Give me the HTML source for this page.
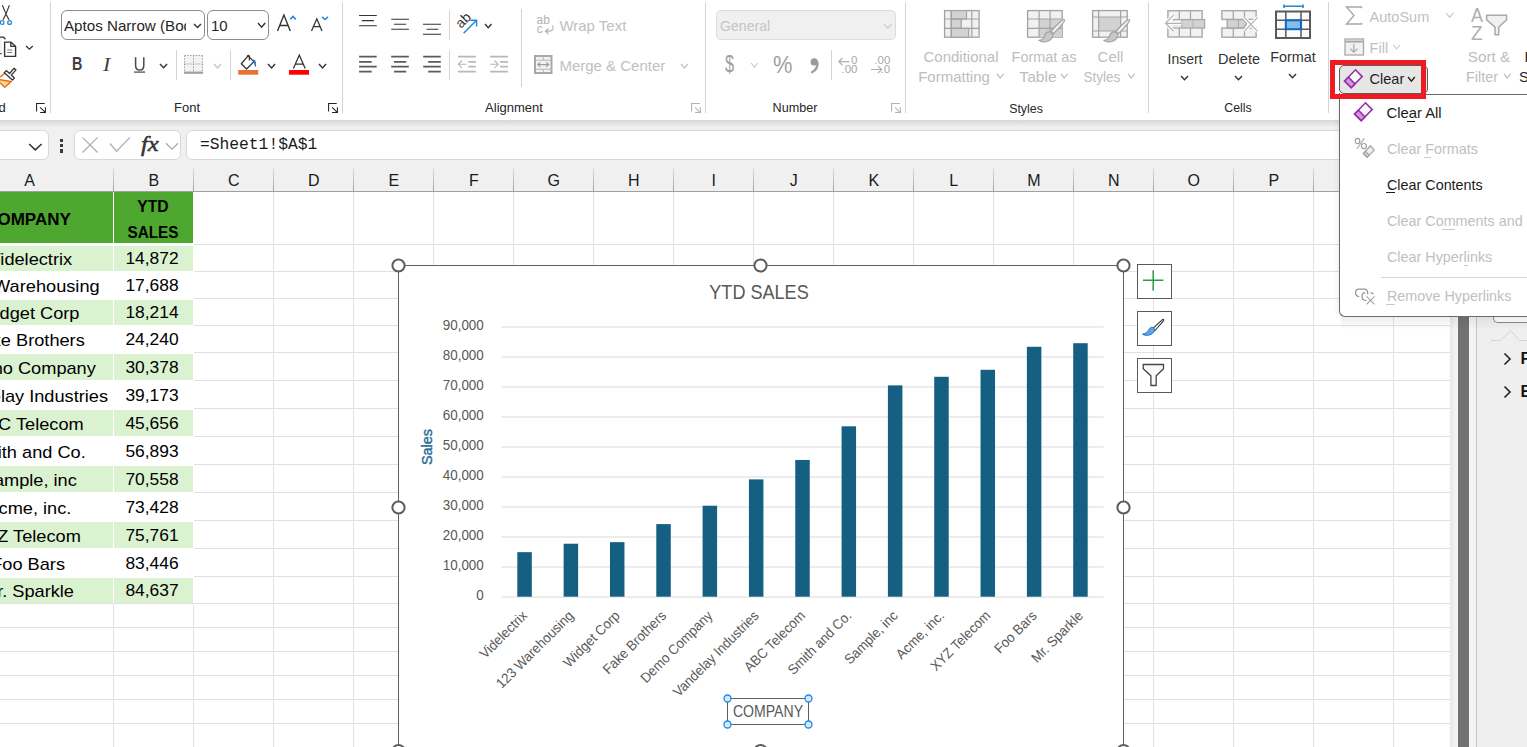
<!DOCTYPE html>
<html><head><meta charset="utf-8"><title>Excel</title>
<style>
*{margin:0;padding:0;box-sizing:border-box}
html,body{width:1527px;height:747px;overflow:hidden;background:#f0f0f0;font-family:"Liberation Sans",sans-serif;position:relative}
svg{overflow:visible}
</style></head><body>
<div style="position:absolute;left:0px;top:0px;width:1527px;height:120px;background:#fff;"></div>
<div style="position:absolute;left:0px;top:120px;width:1527px;height:7px;background:linear-gradient(#d6d6d6,#f0f0f0);"></div>
<div style="position:absolute;left:-10px;top:130px;width:59px;height:30px;background:#fff;border:1px solid #d8d8d8;border-radius:6px;box-sizing:border-box"></div>
<div style="position:absolute;left:74px;top:130px;width:107px;height:30px;background:#fff;border:1px solid #d8d8d8;border-radius:6px;box-sizing:border-box"></div>
<div style="position:absolute;left:186px;top:130px;width:1400px;height:30px;background:#fff;border:1px solid #d8d8d8;border-radius:6px;box-sizing:border-box"></div>
<svg style="position:absolute;left:27px;top:142px;" width="17" height="10" viewBox="0 0 17 10" fill="none"><path d="M2.1 2L8.3 7.9L14.6 2" stroke="#333" stroke-width="1.5"/></svg>
<div style="position:absolute;left:60px;top:139px;width:3.3px;height:3.3px;background:#3a3a3a;"></div>
<div style="position:absolute;left:60px;top:144.2px;width:3.3px;height:3.3px;background:#3a3a3a;"></div>
<div style="position:absolute;left:60px;top:149.4px;width:3.3px;height:3.3px;background:#3a3a3a;"></div>
<svg style="position:absolute;left:80px;top:135px;" width="60" height="20" viewBox="0 0 60 20" fill="none"><path d="M2.5 2.4L17.6 17.5M17.6 2.4L2.5 17.5" stroke="#b0b0b0" stroke-width="1.3"/><path d="M30 8.5L36.5 16.2L50 2.4" stroke="#b0b0b0" stroke-width="1.3"/></svg>
<div style="position:absolute;top:132.88px;font-size:22px;line-height:22px;color:#333;white-space:nowrap;font-family:'Liberation Serif',serif;left:141.00px;transform:scaleX(1.12);transform-origin:0 0;font-style:italic;-webkit-text-stroke:0.5px #333">fx</div>
<svg style="position:absolute;left:164px;top:141px;" width="16" height="10" viewBox="0 0 16 10" fill="none"><path d="M2 2.3L8 8.2L14 2.3" stroke="#a8a8a8" stroke-width="1.2"/></svg>
<div style="position:absolute;top:137.20px;font-size:16.3px;line-height:16.3px;color:#1a1a1a;white-space:nowrap;font-family:'Liberation Mono',monospace;left:200.00px;">=Sheet1!$A$1</div>
<div style="position:absolute;left:0px;top:191px;width:1450px;height:1px;background:#a0a0a0;"></div>
<div style="position:absolute;top:173.46px;font-size:16px;line-height:16px;color:#1a1a1a;white-space:nowrap;font-family:'Liberation Sans',sans-serif;left:-270.50px;width:600px;text-align:center;">A</div>
<div style="position:absolute;left:113px;top:168px;width:1px;height:23px;background:linear-gradient(#e0e0e0,#a0a0a0);"></div>
<div style="position:absolute;top:173.46px;font-size:16px;line-height:16px;color:#1a1a1a;white-space:nowrap;font-family:'Liberation Sans',sans-serif;left:-146.20px;width:600px;text-align:center;">B</div>
<div style="position:absolute;left:193px;top:168px;width:1px;height:23px;background:linear-gradient(#e0e0e0,#a0a0a0);"></div>
<div style="position:absolute;top:173.46px;font-size:16px;line-height:16px;color:#1a1a1a;white-space:nowrap;font-family:'Liberation Sans',sans-serif;left:-66.20px;width:600px;text-align:center;">C</div>
<div style="position:absolute;left:273px;top:168px;width:1px;height:23px;background:linear-gradient(#e0e0e0,#a0a0a0);"></div>
<div style="position:absolute;top:173.46px;font-size:16px;line-height:16px;color:#1a1a1a;white-space:nowrap;font-family:'Liberation Sans',sans-serif;left:13.80px;width:600px;text-align:center;">D</div>
<div style="position:absolute;left:353px;top:168px;width:1px;height:23px;background:linear-gradient(#e0e0e0,#a0a0a0);"></div>
<div style="position:absolute;top:173.46px;font-size:16px;line-height:16px;color:#1a1a1a;white-space:nowrap;font-family:'Liberation Sans',sans-serif;left:93.80px;width:600px;text-align:center;">E</div>
<div style="position:absolute;left:433px;top:168px;width:1px;height:23px;background:linear-gradient(#e0e0e0,#a0a0a0);"></div>
<div style="position:absolute;top:173.46px;font-size:16px;line-height:16px;color:#1a1a1a;white-space:nowrap;font-family:'Liberation Sans',sans-serif;left:173.80px;width:600px;text-align:center;">F</div>
<div style="position:absolute;left:513px;top:168px;width:1px;height:23px;background:linear-gradient(#e0e0e0,#a0a0a0);"></div>
<div style="position:absolute;top:173.46px;font-size:16px;line-height:16px;color:#1a1a1a;white-space:nowrap;font-family:'Liberation Sans',sans-serif;left:253.80px;width:600px;text-align:center;">G</div>
<div style="position:absolute;left:593px;top:168px;width:1px;height:23px;background:linear-gradient(#e0e0e0,#a0a0a0);"></div>
<div style="position:absolute;top:173.46px;font-size:16px;line-height:16px;color:#1a1a1a;white-space:nowrap;font-family:'Liberation Sans',sans-serif;left:333.80px;width:600px;text-align:center;">H</div>
<div style="position:absolute;left:673px;top:168px;width:1px;height:23px;background:linear-gradient(#e0e0e0,#a0a0a0);"></div>
<div style="position:absolute;top:173.46px;font-size:16px;line-height:16px;color:#1a1a1a;white-space:nowrap;font-family:'Liberation Sans',sans-serif;left:413.80px;width:600px;text-align:center;">I</div>
<div style="position:absolute;left:753px;top:168px;width:1px;height:23px;background:linear-gradient(#e0e0e0,#a0a0a0);"></div>
<div style="position:absolute;top:173.46px;font-size:16px;line-height:16px;color:#1a1a1a;white-space:nowrap;font-family:'Liberation Sans',sans-serif;left:493.80px;width:600px;text-align:center;">J</div>
<div style="position:absolute;left:833px;top:168px;width:1px;height:23px;background:linear-gradient(#e0e0e0,#a0a0a0);"></div>
<div style="position:absolute;top:173.46px;font-size:16px;line-height:16px;color:#1a1a1a;white-space:nowrap;font-family:'Liberation Sans',sans-serif;left:573.80px;width:600px;text-align:center;">K</div>
<div style="position:absolute;left:913px;top:168px;width:1px;height:23px;background:linear-gradient(#e0e0e0,#a0a0a0);"></div>
<div style="position:absolute;top:173.46px;font-size:16px;line-height:16px;color:#1a1a1a;white-space:nowrap;font-family:'Liberation Sans',sans-serif;left:653.80px;width:600px;text-align:center;">L</div>
<div style="position:absolute;left:993px;top:168px;width:1px;height:23px;background:linear-gradient(#e0e0e0,#a0a0a0);"></div>
<div style="position:absolute;top:173.46px;font-size:16px;line-height:16px;color:#1a1a1a;white-space:nowrap;font-family:'Liberation Sans',sans-serif;left:733.80px;width:600px;text-align:center;">M</div>
<div style="position:absolute;left:1073px;top:168px;width:1px;height:23px;background:linear-gradient(#e0e0e0,#a0a0a0);"></div>
<div style="position:absolute;top:173.46px;font-size:16px;line-height:16px;color:#1a1a1a;white-space:nowrap;font-family:'Liberation Sans',sans-serif;left:813.80px;width:600px;text-align:center;">N</div>
<div style="position:absolute;left:1153px;top:168px;width:1px;height:23px;background:linear-gradient(#e0e0e0,#a0a0a0);"></div>
<div style="position:absolute;top:173.46px;font-size:16px;line-height:16px;color:#1a1a1a;white-space:nowrap;font-family:'Liberation Sans',sans-serif;left:893.80px;width:600px;text-align:center;">O</div>
<div style="position:absolute;left:1233px;top:168px;width:1px;height:23px;background:linear-gradient(#e0e0e0,#a0a0a0);"></div>
<div style="position:absolute;top:173.46px;font-size:16px;line-height:16px;color:#1a1a1a;white-space:nowrap;font-family:'Liberation Sans',sans-serif;left:973.80px;width:600px;text-align:center;">P</div>
<div style="position:absolute;left:1313px;top:168px;width:1px;height:23px;background:linear-gradient(#e0e0e0,#a0a0a0);"></div>
<div style="position:absolute;top:173.46px;font-size:16px;line-height:16px;color:#1a1a1a;white-space:nowrap;font-family:'Liberation Sans',sans-serif;left:1053.80px;width:600px;text-align:center;">Q</div>
<div style="position:absolute;left:0px;top:192px;width:1450px;height:555px;background:#fff;"></div>
<div style="position:absolute;left:0px;top:244px;width:1450px;height:1px;background:#e1e1e1;"></div>
<div style="position:absolute;left:0px;top:271px;width:1450px;height:1px;background:#e1e1e1;"></div>
<div style="position:absolute;left:0px;top:298px;width:1450px;height:1px;background:#e1e1e1;"></div>
<div style="position:absolute;left:0px;top:325px;width:1450px;height:1px;background:#e1e1e1;"></div>
<div style="position:absolute;left:0px;top:352px;width:1450px;height:1px;background:#e1e1e1;"></div>
<div style="position:absolute;left:0px;top:380px;width:1450px;height:1px;background:#e1e1e1;"></div>
<div style="position:absolute;left:0px;top:408px;width:1450px;height:1px;background:#e1e1e1;"></div>
<div style="position:absolute;left:0px;top:436px;width:1450px;height:1px;background:#e1e1e1;"></div>
<div style="position:absolute;left:0px;top:464px;width:1450px;height:1px;background:#e1e1e1;"></div>
<div style="position:absolute;left:0px;top:492px;width:1450px;height:1px;background:#e1e1e1;"></div>
<div style="position:absolute;left:0px;top:520px;width:1450px;height:1px;background:#e1e1e1;"></div>
<div style="position:absolute;left:0px;top:548px;width:1450px;height:1px;background:#e1e1e1;"></div>
<div style="position:absolute;left:0px;top:576px;width:1450px;height:1px;background:#e1e1e1;"></div>
<div style="position:absolute;left:0px;top:603px;width:1450px;height:1px;background:#e1e1e1;"></div>
<div style="position:absolute;left:0px;top:627px;width:1450px;height:1px;background:#e1e1e1;"></div>
<div style="position:absolute;left:0px;top:651px;width:1450px;height:1px;background:#e1e1e1;"></div>
<div style="position:absolute;left:0px;top:675px;width:1450px;height:1px;background:#e1e1e1;"></div>
<div style="position:absolute;left:0px;top:699px;width:1450px;height:1px;background:#e1e1e1;"></div>
<div style="position:absolute;left:0px;top:723px;width:1450px;height:1px;background:#e1e1e1;"></div>
<div style="position:absolute;left:113px;top:192px;width:1px;height:555px;background:#e1e1e1;"></div>
<div style="position:absolute;left:193px;top:192px;width:1px;height:555px;background:#e1e1e1;"></div>
<div style="position:absolute;left:273px;top:192px;width:1px;height:555px;background:#e1e1e1;"></div>
<div style="position:absolute;left:353px;top:192px;width:1px;height:555px;background:#e1e1e1;"></div>
<div style="position:absolute;left:433px;top:192px;width:1px;height:555px;background:#e1e1e1;"></div>
<div style="position:absolute;left:513px;top:192px;width:1px;height:555px;background:#e1e1e1;"></div>
<div style="position:absolute;left:593px;top:192px;width:1px;height:555px;background:#e1e1e1;"></div>
<div style="position:absolute;left:673px;top:192px;width:1px;height:555px;background:#e1e1e1;"></div>
<div style="position:absolute;left:753px;top:192px;width:1px;height:555px;background:#e1e1e1;"></div>
<div style="position:absolute;left:833px;top:192px;width:1px;height:555px;background:#e1e1e1;"></div>
<div style="position:absolute;left:913px;top:192px;width:1px;height:555px;background:#e1e1e1;"></div>
<div style="position:absolute;left:993px;top:192px;width:1px;height:555px;background:#e1e1e1;"></div>
<div style="position:absolute;left:1073px;top:192px;width:1px;height:555px;background:#e1e1e1;"></div>
<div style="position:absolute;left:1153px;top:192px;width:1px;height:555px;background:#e1e1e1;"></div>
<div style="position:absolute;left:1233px;top:192px;width:1px;height:555px;background:#e1e1e1;"></div>
<div style="position:absolute;left:1313px;top:192px;width:1px;height:555px;background:#e1e1e1;"></div>
<div style="position:absolute;left:1393px;top:192px;width:1px;height:555px;background:#e1e1e1;"></div>
<div style="position:absolute;left:0px;top:192px;width:113px;height:51px;background:#4ea72e;"></div>
<div style="position:absolute;left:114px;top:192px;width:79px;height:51px;background:#4ea72e;"></div>
<div style="position:absolute;left:113px;top:192px;width:1px;height:412px;background:#fff;"></div>
<div style="position:absolute;left:193px;top:192px;width:1px;height:412px;background:#fff;"></div>
<div style="position:absolute;left:0px;top:243px;width:194px;height:3px;background:#fff;"></div>
<div style="position:absolute;left:0px;top:244px;width:194px;height:1px;background:#fff;"></div>
<div style="position:absolute;left:0px;top:246px;width:113px;height:25px;background:#daf2d0;"></div>
<div style="position:absolute;left:114px;top:246px;width:79px;height:25px;background:#daf2d0;"></div>
<div style="position:absolute;left:0px;top:271px;width:194px;height:1px;background:#fff;"></div>
<div style="position:absolute;left:0px;top:298px;width:194px;height:1px;background:#fff;"></div>
<div style="position:absolute;left:0px;top:300px;width:113px;height:25px;background:#daf2d0;"></div>
<div style="position:absolute;left:114px;top:300px;width:79px;height:25px;background:#daf2d0;"></div>
<div style="position:absolute;left:0px;top:325px;width:194px;height:1px;background:#fff;"></div>
<div style="position:absolute;left:0px;top:352px;width:194px;height:1px;background:#fff;"></div>
<div style="position:absolute;left:0px;top:354px;width:113px;height:26px;background:#daf2d0;"></div>
<div style="position:absolute;left:114px;top:354px;width:79px;height:26px;background:#daf2d0;"></div>
<div style="position:absolute;left:0px;top:380px;width:194px;height:1px;background:#fff;"></div>
<div style="position:absolute;left:0px;top:408px;width:194px;height:1px;background:#fff;"></div>
<div style="position:absolute;left:0px;top:410px;width:113px;height:26px;background:#daf2d0;"></div>
<div style="position:absolute;left:114px;top:410px;width:79px;height:26px;background:#daf2d0;"></div>
<div style="position:absolute;left:0px;top:436px;width:194px;height:1px;background:#fff;"></div>
<div style="position:absolute;left:0px;top:464px;width:194px;height:1px;background:#fff;"></div>
<div style="position:absolute;left:0px;top:466px;width:113px;height:26px;background:#daf2d0;"></div>
<div style="position:absolute;left:114px;top:466px;width:79px;height:26px;background:#daf2d0;"></div>
<div style="position:absolute;left:0px;top:492px;width:194px;height:1px;background:#fff;"></div>
<div style="position:absolute;left:0px;top:520px;width:194px;height:1px;background:#fff;"></div>
<div style="position:absolute;left:0px;top:522px;width:113px;height:26px;background:#daf2d0;"></div>
<div style="position:absolute;left:114px;top:522px;width:79px;height:26px;background:#daf2d0;"></div>
<div style="position:absolute;left:0px;top:548px;width:194px;height:1px;background:#fff;"></div>
<div style="position:absolute;left:0px;top:576px;width:194px;height:1px;background:#fff;"></div>
<div style="position:absolute;left:0px;top:578px;width:113px;height:25px;background:#daf2d0;"></div>
<div style="position:absolute;left:114px;top:578px;width:79px;height:25px;background:#daf2d0;"></div>
<div style="position:absolute;left:0px;top:603px;width:194px;height:1px;background:#e1e1e1;"></div>
<div style="position:absolute;top:210.61px;font-size:17px;line-height:17px;color:#000;white-space:nowrap;font-family:'Liberation Sans',sans-serif;font-weight:bold;left:-272.00px;width:600px;text-align:center;transform:scaleX(1.0);transform-origin:50% 0;">COMPANY</div>
<div style="position:absolute;top:197.61px;font-size:17px;line-height:17px;color:#000;white-space:nowrap;font-family:'Liberation Sans',sans-serif;font-weight:bold;left:-147.00px;width:600px;text-align:center;transform:scaleX(0.92);transform-origin:50% 0;">YTD</div>
<div style="position:absolute;top:223.61px;font-size:17px;line-height:17px;color:#000;white-space:nowrap;font-family:'Liberation Sans',sans-serif;font-weight:bold;left:-147.00px;width:600px;text-align:center;transform:scaleX(0.9);transform-origin:50% 0;">SALES</div>
<div style="position:absolute;top:250.61px;font-size:17px;line-height:17px;color:#000;white-space:nowrap;font-family:'Liberation Sans',sans-serif;right:1454.60px;text-align:right;transform:scaleX(1.07);transform-origin:100% 0;">Videlectrix</div>
<div style="position:absolute;top:250.27px;font-size:17.4px;line-height:17.4px;color:#000;white-space:nowrap;font-family:'Liberation Sans',sans-serif;left:-148.00px;width:600px;text-align:center;">14,872</div>
<div style="position:absolute;top:277.61px;font-size:17px;line-height:17px;color:#000;white-space:nowrap;font-family:'Liberation Sans',sans-serif;right:1427.20px;text-align:right;transform:scaleX(1.07);transform-origin:100% 0;">123 Warehousing</div>
<div style="position:absolute;top:277.27px;font-size:17.4px;line-height:17.4px;color:#000;white-space:nowrap;font-family:'Liberation Sans',sans-serif;left:-148.00px;width:600px;text-align:center;">17,688</div>
<div style="position:absolute;top:304.61px;font-size:17px;line-height:17px;color:#000;white-space:nowrap;font-family:'Liberation Sans',sans-serif;right:1447.50px;text-align:right;transform:scaleX(1.07);transform-origin:100% 0;">Widget Corp</div>
<div style="position:absolute;top:304.27px;font-size:17.4px;line-height:17.4px;color:#000;white-space:nowrap;font-family:'Liberation Sans',sans-serif;left:-148.00px;width:600px;text-align:center;">18,214</div>
<div style="position:absolute;top:331.61px;font-size:17px;line-height:17px;color:#000;white-space:nowrap;font-family:'Liberation Sans',sans-serif;right:1442.20px;text-align:right;transform:scaleX(1.07);transform-origin:100% 0;">Fake Brothers</div>
<div style="position:absolute;top:331.27px;font-size:17.4px;line-height:17.4px;color:#000;white-space:nowrap;font-family:'Liberation Sans',sans-serif;left:-148.00px;width:600px;text-align:center;">24,240</div>
<div style="position:absolute;top:359.61px;font-size:17px;line-height:17px;color:#000;white-space:nowrap;font-family:'Liberation Sans',sans-serif;right:1431.40px;text-align:right;transform:scaleX(1.07);transform-origin:100% 0;">Demo Company</div>
<div style="position:absolute;top:359.27px;font-size:17.4px;line-height:17.4px;color:#000;white-space:nowrap;font-family:'Liberation Sans',sans-serif;left:-148.00px;width:600px;text-align:center;">30,378</div>
<div style="position:absolute;top:387.61px;font-size:17px;line-height:17px;color:#000;white-space:nowrap;font-family:'Liberation Sans',sans-serif;right:1419.00px;text-align:right;transform:scaleX(1.07);transform-origin:100% 0;">Vandelay Industries</div>
<div style="position:absolute;top:387.27px;font-size:17.4px;line-height:17.4px;color:#000;white-space:nowrap;font-family:'Liberation Sans',sans-serif;left:-148.00px;width:600px;text-align:center;">39,173</div>
<div style="position:absolute;top:415.61px;font-size:17px;line-height:17px;color:#000;white-space:nowrap;font-family:'Liberation Sans',sans-serif;right:1443.10px;text-align:right;transform:scaleX(1.07);transform-origin:100% 0;">ABC Telecom</div>
<div style="position:absolute;top:415.27px;font-size:17.4px;line-height:17.4px;color:#000;white-space:nowrap;font-family:'Liberation Sans',sans-serif;left:-148.00px;width:600px;text-align:center;">45,656</div>
<div style="position:absolute;top:443.61px;font-size:17px;line-height:17px;color:#000;white-space:nowrap;font-family:'Liberation Sans',sans-serif;right:1441.40px;text-align:right;transform:scaleX(1.07);transform-origin:100% 0;">Smith and Co.</div>
<div style="position:absolute;top:443.27px;font-size:17.4px;line-height:17.4px;color:#000;white-space:nowrap;font-family:'Liberation Sans',sans-serif;left:-148.00px;width:600px;text-align:center;">56,893</div>
<div style="position:absolute;top:471.61px;font-size:17px;line-height:17px;color:#000;white-space:nowrap;font-family:'Liberation Sans',sans-serif;right:1450.40px;text-align:right;transform:scaleX(1.07);transform-origin:100% 0;">Sample, inc</div>
<div style="position:absolute;top:471.27px;font-size:17.4px;line-height:17.4px;color:#000;white-space:nowrap;font-family:'Liberation Sans',sans-serif;left:-148.00px;width:600px;text-align:center;">70,558</div>
<div style="position:absolute;top:499.61px;font-size:17px;line-height:17px;color:#000;white-space:nowrap;font-family:'Liberation Sans',sans-serif;right:1455.20px;text-align:right;transform:scaleX(1.07);transform-origin:100% 0;">Acme, inc.</div>
<div style="position:absolute;top:499.27px;font-size:17.4px;line-height:17.4px;color:#000;white-space:nowrap;font-family:'Liberation Sans',sans-serif;left:-148.00px;width:600px;text-align:center;">73,428</div>
<div style="position:absolute;top:527.61px;font-size:17px;line-height:17px;color:#000;white-space:nowrap;font-family:'Liberation Sans',sans-serif;right:1446.10px;text-align:right;transform:scaleX(1.07);transform-origin:100% 0;">XYZ Telecom</div>
<div style="position:absolute;top:527.27px;font-size:17.4px;line-height:17.4px;color:#000;white-space:nowrap;font-family:'Liberation Sans',sans-serif;left:-148.00px;width:600px;text-align:center;">75,761</div>
<div style="position:absolute;top:555.61px;font-size:17px;line-height:17px;color:#000;white-space:nowrap;font-family:'Liberation Sans',sans-serif;right:1462.30px;text-align:right;transform:scaleX(1.07);transform-origin:100% 0;">Foo Bars</div>
<div style="position:absolute;top:555.27px;font-size:17.4px;line-height:17.4px;color:#000;white-space:nowrap;font-family:'Liberation Sans',sans-serif;left:-148.00px;width:600px;text-align:center;">83,446</div>
<div style="position:absolute;top:582.61px;font-size:17px;line-height:17px;color:#000;white-space:nowrap;font-family:'Liberation Sans',sans-serif;right:1453.30px;text-align:right;transform:scaleX(1.07);transform-origin:100% 0;">Mr. Sparkle</div>
<div style="position:absolute;top:582.27px;font-size:17.4px;line-height:17.4px;color:#000;white-space:nowrap;font-family:'Liberation Sans',sans-serif;left:-148.00px;width:600px;text-align:center;">84,637</div>
<div style="position:absolute;left:398px;top:265px;width:726px;height:486px;background:#fff;border:1px solid #606060;box-sizing:border-box"></div>
<svg style="position:absolute;left:0px;top:0px;pointer-events:none" width="1527" height="747" viewBox="0 0 1527 747" fill="none"><rect x="501.4" y="596.5" width="602.1999999999999" height="1" fill="#d9d9d9"/><rect x="501.4" y="566.5" width="602.1999999999999" height="1" fill="#d9d9d9"/><rect x="501.4" y="536.5" width="602.1999999999999" height="1" fill="#d9d9d9"/><rect x="501.4" y="506.5" width="602.1999999999999" height="1" fill="#d9d9d9"/><rect x="501.4" y="476.5" width="602.1999999999999" height="1" fill="#d9d9d9"/><rect x="501.4" y="446.5" width="602.1999999999999" height="1" fill="#d9d9d9"/><rect x="501.4" y="416.5" width="602.1999999999999" height="1" fill="#d9d9d9"/><rect x="501.4" y="386.5" width="602.1999999999999" height="1" fill="#d9d9d9"/><rect x="501.4" y="356.5" width="602.1999999999999" height="1" fill="#d9d9d9"/><rect x="501.4" y="326.5" width="602.1999999999999" height="1" fill="#d9d9d9"/><rect x="517.31" y="552.16" width="14.5" height="44.54" fill="#156082"/><rect x="563.63" y="543.72" width="14.5" height="52.98" fill="#156082"/><rect x="609.96" y="542.15" width="14.5" height="54.55" fill="#156082"/><rect x="656.28" y="524.10" width="14.5" height="72.60" fill="#156082"/><rect x="702.60" y="505.72" width="14.5" height="90.98" fill="#156082"/><rect x="748.93" y="479.38" width="14.5" height="117.32" fill="#156082"/><rect x="795.25" y="459.96" width="14.5" height="136.74" fill="#156082"/><rect x="841.57" y="426.31" width="14.5" height="170.39" fill="#156082"/><rect x="887.90" y="385.38" width="14.5" height="211.32" fill="#156082"/><rect x="934.22" y="376.78" width="14.5" height="219.92" fill="#156082"/><rect x="980.54" y="369.80" width="14.5" height="226.90" fill="#156082"/><rect x="1026.87" y="346.78" width="14.5" height="249.92" fill="#156082"/><rect x="1073.19" y="343.21" width="14.5" height="253.49" fill="#156082"/></svg>
<div style="position:absolute;top:587.65px;font-size:14px;line-height:14px;color:#595959;white-space:nowrap;font-family:'Liberation Sans',sans-serif;right:1043.30px;text-align:right;transform:scaleX(0.96);transform-origin:100% 0;">0</div>
<div style="position:absolute;top:557.70px;font-size:14px;line-height:14px;color:#595959;white-space:nowrap;font-family:'Liberation Sans',sans-serif;right:1043.30px;text-align:right;transform:scaleX(0.96);transform-origin:100% 0;">10,000</div>
<div style="position:absolute;top:527.75px;font-size:14px;line-height:14px;color:#595959;white-space:nowrap;font-family:'Liberation Sans',sans-serif;right:1043.30px;text-align:right;transform:scaleX(0.96);transform-origin:100% 0;">20,000</div>
<div style="position:absolute;top:497.80px;font-size:14px;line-height:14px;color:#595959;white-space:nowrap;font-family:'Liberation Sans',sans-serif;right:1043.30px;text-align:right;transform:scaleX(0.96);transform-origin:100% 0;">30,000</div>
<div style="position:absolute;top:467.85px;font-size:14px;line-height:14px;color:#595959;white-space:nowrap;font-family:'Liberation Sans',sans-serif;right:1043.30px;text-align:right;transform:scaleX(0.96);transform-origin:100% 0;">40,000</div>
<div style="position:absolute;top:437.90px;font-size:14px;line-height:14px;color:#595959;white-space:nowrap;font-family:'Liberation Sans',sans-serif;right:1043.30px;text-align:right;transform:scaleX(0.96);transform-origin:100% 0;">50,000</div>
<div style="position:absolute;top:407.95px;font-size:14px;line-height:14px;color:#595959;white-space:nowrap;font-family:'Liberation Sans',sans-serif;right:1043.30px;text-align:right;transform:scaleX(0.96);transform-origin:100% 0;">60,000</div>
<div style="position:absolute;top:378.00px;font-size:14px;line-height:14px;color:#595959;white-space:nowrap;font-family:'Liberation Sans',sans-serif;right:1043.30px;text-align:right;transform:scaleX(0.96);transform-origin:100% 0;">70,000</div>
<div style="position:absolute;top:348.05px;font-size:14px;line-height:14px;color:#595959;white-space:nowrap;font-family:'Liberation Sans',sans-serif;right:1043.30px;text-align:right;transform:scaleX(0.96);transform-origin:100% 0;">80,000</div>
<div style="position:absolute;top:318.10px;font-size:14px;line-height:14px;color:#595959;white-space:nowrap;font-family:'Liberation Sans',sans-serif;right:1043.30px;text-align:right;transform:scaleX(0.96);transform-origin:100% 0;">90,000</div>
<div style="position:absolute;top:280.92px;font-size:21px;line-height:21px;color:#595959;white-space:nowrap;font-family:'Liberation Sans',sans-serif;left:459.00px;width:600px;text-align:center;transform:scaleX(0.86);transform-origin:50% 0;">YTD SALES</div>
<div style="position:absolute;left:327px;top:437px;width:200px;height:20px;text-align:center;font-size:15px;line-height:20px;color:#1f6b94;-webkit-text-stroke:0.4px #1f6b94;transform:rotate(-90deg) scaleX(0.96);transform-origin:100px 10px;font-family:'Liberation Sans',sans-serif">Sales</div>
<svg style="position:absolute;left:0px;top:0px;" width="1527" height="747" viewBox="0 0 1527 747" fill="none"><g font-family="Liberation Sans" font-size="14" fill="#595959" textLength=""><text x="0" y="0" text-anchor="end" transform="translate(528.06 616.50) rotate(-45) scale(0.94 1)">Videlectrix</text><text x="0" y="0" text-anchor="end" transform="translate(574.38 616.50) rotate(-45) scale(0.94 1)">123 Warehousing</text><text x="0" y="0" text-anchor="end" transform="translate(620.71 616.50) rotate(-45) scale(0.94 1)">Widget Corp</text><text x="0" y="0" text-anchor="end" transform="translate(667.03 616.50) rotate(-45) scale(0.94 1)">Fake Brothers</text><text x="0" y="0" text-anchor="end" transform="translate(713.35 616.50) rotate(-45) scale(0.94 1)">Demo Company</text><text x="0" y="0" text-anchor="end" transform="translate(759.68 616.50) rotate(-45) scale(0.94 1)">Vandelay Industries</text><text x="0" y="0" text-anchor="end" transform="translate(806.00 616.50) rotate(-45) scale(0.94 1)">ABC Telecom</text><text x="0" y="0" text-anchor="end" transform="translate(852.32 616.50) rotate(-45) scale(0.94 1)">Smith and Co.</text><text x="0" y="0" text-anchor="end" transform="translate(898.65 616.50) rotate(-45) scale(0.94 1)">Sample, inc</text><text x="0" y="0" text-anchor="end" transform="translate(944.97 616.50) rotate(-45) scale(0.94 1)">Acme, inc.</text><text x="0" y="0" text-anchor="end" transform="translate(991.29 616.50) rotate(-45) scale(0.94 1)">XYZ Telecom</text><text x="0" y="0" text-anchor="end" transform="translate(1037.62 616.50) rotate(-45) scale(0.94 1)">Foo Bars</text><text x="0" y="0" text-anchor="end" transform="translate(1083.94 616.50) rotate(-45) scale(0.94 1)">Mr. Sparkle</text></g></svg>
<div style="position:absolute;left:727px;top:698px;width:82px;height:27px;background:#fff;border:1px solid #5f5f5f;box-sizing:border-box"></div>
<div style="position:absolute;top:703.66px;font-size:16px;line-height:16px;color:#595959;white-space:nowrap;font-family:'Liberation Sans',sans-serif;left:468.00px;width:600px;text-align:center;transform:scaleX(0.88);transform-origin:50% 0;">COMPANY</div>
<svg style="position:absolute;left:0px;top:0px;" width="1527" height="747" viewBox="0 0 1527 747" fill="none"><circle cx="727.5" cy="698.5" r="3.5" fill="#d6e8f7" stroke="#1e88e5" stroke-width="1.3"/><circle cx="808.5" cy="698.5" r="3.5" fill="#d6e8f7" stroke="#1e88e5" stroke-width="1.3"/><circle cx="727.5" cy="724.5" r="3.5" fill="#d6e8f7" stroke="#1e88e5" stroke-width="1.3"/><circle cx="808.5" cy="724.5" r="3.5" fill="#d6e8f7" stroke="#1e88e5" stroke-width="1.3"/><circle cx="398.5" cy="265.5" r="6.1" fill="#fff" stroke="#5c5c5c" stroke-width="2"/><circle cx="760.5" cy="265.5" r="6.1" fill="#fff" stroke="#5c5c5c" stroke-width="2"/><circle cx="1123.5" cy="265.5" r="6.1" fill="#fff" stroke="#5c5c5c" stroke-width="2"/><circle cx="398.5" cy="507.5" r="6.1" fill="#fff" stroke="#5c5c5c" stroke-width="2"/><circle cx="1123.5" cy="507.5" r="6.1" fill="#fff" stroke="#5c5c5c" stroke-width="2"/><circle cx="398.5" cy="751" r="6.1" fill="#fff" stroke="#5c5c5c" stroke-width="2"/><circle cx="760.5" cy="751" r="6.1" fill="#fff" stroke="#5c5c5c" stroke-width="2"/><circle cx="1123.5" cy="751" r="6.1" fill="#fff" stroke="#5c5c5c" stroke-width="2"/></svg>
<div style="position:absolute;left:1137px;top:264px;width:35px;height:35px;background:#fff;border:1px solid #5a5a5a;box-sizing:border-box"></div>
<div style="position:absolute;left:1137px;top:311px;width:35px;height:35px;background:#fff;border:1px solid #5a5a5a;box-sizing:border-box"></div>
<div style="position:absolute;left:1137px;top:358px;width:35px;height:35px;background:#fff;border:1px solid #5a5a5a;box-sizing:border-box"></div>
<svg style="position:absolute;left:1137px;top:264px;" width="35" height="35" viewBox="0 0 35 35" fill="none"><path d="M16.2 6.3V26.7M6 16.3H26.4" stroke="#2a9d48" stroke-width="1.5"/></svg>
<svg style="position:absolute;left:1137px;top:311px;" width="35" height="35" viewBox="0 0 35 35" fill="none"><path d="M15.8 17.4L25.2 8.8C26.3 7.8 27.3 8.8 26.5 9.9L18 19.5Z" stroke="#333" stroke-width="1.1" fill="#fff" stroke-linejoin="round"/><path d="M17.8 19.2C17.6 16.5 14.6 15.5 12.8 17.3C11 19.1 11.3 21.8 5.6 23.2C8.5 25.3 15.8 24.6 17.8 19.2Z" fill="#5ea6e6" stroke="#1f6fc0" stroke-width="1"/></svg>
<svg style="position:absolute;left:1137px;top:358px;" width="35" height="35" viewBox="0 0 35 35" fill="none"><path d="M6.2 6.5H26.5V10.7L19.2 17.7V27.5H13.9V17.7L6.2 10.7Z" stroke="#444" stroke-width="1.3" stroke-linejoin="round" fill="#f8f8f8"/></svg>
<svg style="position:absolute;left:0px;top:0px;" width="20" height="30" viewBox="0 0 20 30" fill="none"><path d="M2.4 5.3L6 13.9L3 19.8M9.4 5.3L6 13.9L9 19.8" stroke="#333" stroke-width="1.1" stroke-linejoin="round"/><circle cx="2.1" cy="22.5" r="1.9" stroke="#2b88d8" stroke-width="1.3"/><circle cx="9.6" cy="22.5" r="1.9" stroke="#2b88d8" stroke-width="1.3"/></svg>
<svg style="position:absolute;left:0px;top:32px;" width="20" height="28" viewBox="0 0 20 28" fill="none"><path d="M0 5.2H3.6L5.4 7.2" stroke="#333" stroke-width="1.3"/><rect x="0" y="6" width="2" height="15.5" fill="#f3f3f3"/><path d="M0 21.7H1.8" stroke="#555" stroke-width="1.2"/><path d="M4.6 10.1H10.8L15.6 14.6V24.4H4.6Z" stroke="#333" stroke-width="1.4" stroke-linejoin="round" fill="#fff"/><path d="M10.8 9.9V14.4H15.6" stroke="#333" stroke-width="1.3"/><path d="M7.3 18H12.2M7.3 20.5H12.2" stroke="#777" stroke-width="1.1"/></svg>
<svg style="position:absolute;left:24px;top:43.7px;" width="10.799999999999997" height="7.199999999999996" viewBox="0 0 10.799999999999997 7.199999999999996" fill="none"><path d="M2 2L5.40 5.20L8.80 2" stroke="#333" stroke-width="1.3"/></svg>
<svg style="position:absolute;left:0px;top:64px;" width="20" height="28" viewBox="0 0 20 28" fill="none"><path d="M0 15.8L11.2 17.4L4.8 23.2L0 18.8Z" fill="#fbd98c"/><path d="M0 12.5L4.3 8.8L12.4 16.1L11.2 17.4L0 15.8Z" fill="#fff"/><path d="M0 12.8C1.5 12 3 11 4.3 9.6M0 15.8L11.2 17.4L4.8 23.2L0 18.8" stroke="#e3711c" stroke-width="1.5" fill="none" stroke-linejoin="round"/><path d="M4.3 8.8L6.3 6.6L9.6 9.5L14.1 4.2L16 5.9L11.3 11.1L14.4 13.9L12.4 16.1Z" stroke="#333" stroke-width="1.3" fill="#fff" stroke-linejoin="round"/></svg>
<div style="position:absolute;top:100.80px;font-size:13px;line-height:13px;color:#262626;white-space:nowrap;font-family:'Liberation Sans',sans-serif;left:-1.50px;">d</div>
<svg style="position:absolute;left:36px;top:103px;" width="11" height="11" viewBox="0 0 11 11" fill="none"><path d="M.6 8.5V.5H8.7M4.1 4.3L9.3 9.3M9.4 4.2V9.4H4.1" stroke="#222" stroke-width="1.05"/></svg>
<div style="position:absolute;left:50px;top:2px;width:1px;height:111px;background:#d4d4d4;"></div>
<div style="position:absolute;left:61px;top:10px;width:144px;height:30px;background:#fff;border:1px solid #8c8c8c;border-radius:6px;box-sizing:border-box"></div>
<div style="position:absolute;left:62px;top:11px;width:124px;height:28px;overflow:hidden"><div style="position:absolute;top:7.00px;font-size:15px;line-height:15px;color:#262626;white-space:nowrap;font-family:'Liberation Sans',sans-serif;left:2.40px;transform:scaleX(1.01);transform-origin:0 0;">Aptos Narrow (Body)</div>
</div>
<svg style="position:absolute;left:191.9px;top:21.9px;" width="11.0" height="7.600000000000001" viewBox="0 0 11.0 7.600000000000001" fill="none"><path d="M2 2L5.50 5.60L9.00 2" stroke="#333" stroke-width="1.4"/></svg>
<div style="position:absolute;left:207px;top:10px;width:62px;height:30px;background:#fff;border:1px solid #8c8c8c;border-radius:6px;box-sizing:border-box"></div>
<div style="position:absolute;top:18.40px;font-size:15px;line-height:15px;color:#262626;white-space:nowrap;font-family:'Liberation Sans',sans-serif;left:211.00px;">10</div>
<svg style="position:absolute;left:255.8px;top:21.3px;" width="11.199999999999989" height="8.2" viewBox="0 0 11.199999999999989 8.2" fill="none"><path d="M2 2L5.60 6.20L9.20 2" stroke="#333" stroke-width="1.4"/></svg>
<svg style="position:absolute;left:276px;top:14px;" width="22" height="19" viewBox="0 0 22 19" fill="none"><path d="M1.5 17.1L7.9 1.1L14.3 17.1M4.2 11.5H11.6" stroke="#333" stroke-width="1.4"/><path d="M14.2 5.4L17 2.4L19.8 5.4" stroke="#2f86de" stroke-width="1.6"/></svg>
<svg style="position:absolute;left:310px;top:15px;" width="20" height="18" viewBox="0 0 20 18" fill="none"><path d="M1.5 16.1L6.8 3.8L12 16.1M3.8 11.6H9.8" stroke="#333" stroke-width="1.3"/><path d="M12 1.8L15 4.5L18 1.8" stroke="#2f86de" stroke-width="1.6"/></svg>
<div style="position:absolute;top:56.29px;font-size:17.5px;line-height:17.5px;color:#404040;white-space:nowrap;font-family:'Liberation Sans',sans-serif;font-weight:bold;left:71.50px;transform:scaleX(0.82);transform-origin:0 0;">B</div>
<div style="position:absolute;top:54.52px;font-size:19px;line-height:19px;color:#404040;white-space:nowrap;font-family:'Liberation Serif',serif;left:102.60px;transform:scaleX(1.15);transform-origin:0 0;font-style:italic">I</div>
<svg style="position:absolute;left:133px;top:56px;" width="14" height="18" viewBox="0 0 14 18" fill="none"><path d="M2.6 1.2V9.2C2.6 12.4 4.4 14.1 6.7 14.1C9 14.1 10.8 12.4 10.8 9.2V1.2" stroke="#4a4a4a" stroke-width="1.5"/><path d="M1 16.1H12.1" stroke="#6a6a6a" stroke-width="1.5"/></svg>
<svg style="position:absolute;left:157.8px;top:61.6px;" width="11.099999999999994" height="7.800000000000004" viewBox="0 0 11.099999999999994 7.800000000000004" fill="none"><path d="M2 2L5.55 5.80L9.10 2" stroke="#333" stroke-width="1.4"/></svg>
<div style="position:absolute;left:176px;top:50px;width:1px;height:30px;background:#d4d4d4;"></div>
<svg style="position:absolute;left:184px;top:55px;" width="19" height="19" viewBox="0 0 19 19" fill="none"><rect x="0.5" y="0.5" width="18" height="16.5" fill="#f2f2f2"/><path d="M.5 .5H18.5M.5 .5V17M18.5 .5V17M9.5 .5V17M.5 9H18.5" stroke="#9a9a9a" stroke-width="1" stroke-dasharray="1.4 1.4"/><rect x="0" y="16.6" width="19" height="2.2" fill="#9e9e9e"/></svg>
<svg style="position:absolute;left:211.8px;top:61.5px;" width="11.099999999999994" height="7.900000000000006" viewBox="0 0 11.099999999999994 7.900000000000006" fill="none"><path d="M2 2L5.55 5.90L9.10 2" stroke="#c6c6c6" stroke-width="1.4"/></svg>
<div style="position:absolute;left:230px;top:50px;width:1px;height:30px;background:#d4d4d4;"></div>
<svg style="position:absolute;left:237px;top:54px;" width="22" height="22" viewBox="0 0 22 22" fill="none"><path d="M4.3 9.7L11.1 1.9L16.9 7.6L9.6 15Z" stroke="#333" stroke-width="1.3" fill="#fff" stroke-linejoin="round"/><path d="M10.2 2.5C10.6 .8 12.4 .8 12.4 2.5V6.5" stroke="#333" stroke-width="1.2"/><path d="M16.5 5.5C18.6 5.5 19.3 8.5 18.9 13C18.2 13 17.8 12 17.4 10.2L16 7Z" fill="#1f74c8"/><rect x="1.2" y="16" width="20" height="4.7" fill="#e97132"/></svg>
<svg style="position:absolute;left:265.8px;top:61.5px;" width="11.099999999999966" height="7.900000000000006" viewBox="0 0 11.099999999999966 7.900000000000006" fill="none"><path d="M2 2L5.55 5.90L9.10 2" stroke="#333" stroke-width="1.4"/></svg>
<svg style="position:absolute;left:288px;top:54px;" width="22" height="22" viewBox="0 0 22 22" fill="none"><path d="M5.4 14.4L11.3 1.1L17.2 14.4M7.3 10.1H15.3" stroke="#333" stroke-width="1.3"/><rect x="1" y="16" width="20" height="4.7" fill="#ff0000"/></svg>
<svg style="position:absolute;left:316.9px;top:61.5px;" width="11.100000000000023" height="7.900000000000006" viewBox="0 0 11.100000000000023 7.900000000000006" fill="none"><path d="M2 2L5.55 5.90L9.10 2" stroke="#333" stroke-width="1.4"/></svg>
<div style="position:absolute;top:100.80px;font-size:13px;line-height:13px;color:#262626;white-space:nowrap;font-family:'Liberation Sans',sans-serif;left:-113.00px;width:600px;text-align:center;">Font</div>
<svg style="position:absolute;left:328px;top:103px;" width="11" height="11" viewBox="0 0 11 11" fill="none"><path d="M.6 8.5V.5H8.7M4.1 4.3L9.3 9.3M9.4 4.2V9.4H4.1" stroke="#222" stroke-width="1.05"/></svg>
<div style="position:absolute;left:342px;top:2px;width:1px;height:111px;background:#d4d4d4;"></div>
<svg style="position:absolute;left:0px;top:0px;" width="1527" height="130" viewBox="0 0 1527 130" fill="none"><path d="M359.1 15.5H376.8M361.8 20.6H373.9M359.1 25.7H376.8" stroke="#333" stroke-width="1.1"/></svg>
<svg style="position:absolute;left:0px;top:0px;" width="1527" height="130" viewBox="0 0 1527 130" fill="none"><path d="M391.2 19.3H408.9M394 24.3H406.1M391.2 29.3H408.9" stroke="#333" stroke-width="1.1"/></svg>
<svg style="position:absolute;left:0px;top:0px;" width="1527" height="130" viewBox="0 0 1527 130" fill="none"><path d="M423 24.3H441M426.5 29.3H438.3M423 34.3H441" stroke="#333" stroke-width="1.1"/></svg>
<div style="position:absolute;left:449px;top:10px;width:1px;height:30px;background:#d4d4d4;"></div>
<div style="position:absolute;left:452px;top:13px;font-size:14px;line-height:14px;color:#333;transform:rotate(-45deg);transform-origin:50% 50%;width:22px;text-align:center;font-family:'Liberation Sans',sans-serif">ab</div>
<svg style="position:absolute;left:460px;top:17px;" width="20" height="20" viewBox="0 0 20 20" fill="none"><path d="M3.6 16.3L16.6 3.3M10.5 3.3H16.6V9.4" stroke="#1f86d6" stroke-width="1.4"/></svg>
<svg style="position:absolute;left:483px;top:21.7px;" width="10.5" height="7.699999999999999" viewBox="0 0 10.5 7.699999999999999" fill="none"><path d="M2 2L5.25 5.70L8.50 2" stroke="#333" stroke-width="1.4"/></svg>
<svg style="position:absolute;left:0px;top:0px;" width="1527" height="130" viewBox="0 0 1527 130" fill="none"><path d="M359.1 56.7H376.7M359.1 61.9H371.7M359.1 66.7H376.7M359.1 71.7H371.7" stroke="#5a5a5a" stroke-width="1.8"/></svg>
<svg style="position:absolute;left:0px;top:0px;" width="1527" height="130" viewBox="0 0 1527 130" fill="none"><path d="M391.2 56.7H408.8M394 61.9H406.2M391.2 66.7H408.8M394 71.7H406.2" stroke="#5a5a5a" stroke-width="1.8"/></svg>
<svg style="position:absolute;left:0px;top:0px;" width="1527" height="130" viewBox="0 0 1527 130" fill="none"><path d="M423.2 56.7H440.8M428.2 61.9H440.8M423.2 66.7H440.8M428.2 71.7H440.8" stroke="#5a5a5a" stroke-width="1.8"/></svg>
<div style="position:absolute;left:449px;top:50px;width:1px;height:30px;background:#d4d4d4;"></div>
<svg style="position:absolute;left:0px;top:0px;" width="1527" height="130" viewBox="0 0 1527 130" fill="none"><path d="M458 56.7H475.8M468.3 61.9H475.8M468.3 66.7H475.8M458 71.7H475.8" stroke="#b8b8b8" stroke-width="1.8"/></svg>
<svg style="position:absolute;left:0px;top:0px;" width="1527" height="130" viewBox="0 0 1527 130" fill="none"><path d="M490.1 56.7H507.9M500.1 61.9H507.9M500.1 66.7H507.9M490.1 71.7H507.9" stroke="#b8b8b8" stroke-width="1.8"/></svg>
<svg style="position:absolute;left:0px;top:0px;" width="1527" height="130" viewBox="0 0 1527 130" fill="none"><path d="M458.5 64.3H466.5M462 60.5L458.3 64.3L462 68.1M490 64.3H498M494.5 60.5L498.2 64.3L494.5 68.1" stroke="#b8b8b8" stroke-width="1.1"/></svg>
<div style="position:absolute;left:521px;top:9px;width:1px;height:78px;background:#d4d4d4;"></div>
<div style="position:absolute;top:14.04px;font-size:12px;line-height:12px;color:#b3b3b3;white-space:nowrap;font-family:'Liberation Sans',sans-serif;left:536.50px;transform:scaleX(1.0);transform-origin:0 0;">ab</div>
<div style="position:absolute;top:22.84px;font-size:12px;line-height:12px;color:#b3b3b3;white-space:nowrap;font-family:'Liberation Sans',sans-serif;left:536.80px;">c</div>
<svg style="position:absolute;left:543px;top:24px;" width="14" height="11" viewBox="0 0 14 11" fill="none"><path d="M9.5 1.5C11 3.5 10.5 7 6.5 7.2H3M5.5 4.5L2.5 7.2L5.5 10" stroke="#b3b3b3" stroke-width="1.2" fill="none"/></svg>
<div style="position:absolute;top:18.20px;font-size:15px;line-height:15px;color:#bfbfbf;white-space:nowrap;font-family:'Liberation Sans',sans-serif;left:559.40px;">Wrap Text</div>
<svg style="position:absolute;left:534px;top:55px;" width="19" height="19" viewBox="0 0 19 19" fill="none"><rect x="1" y="1" width="16.5" height="17" stroke="#a8a8a8" stroke-width="2" fill="#f2f2f2"/><path d="M1 5.2H17.5M1 14.2H17.5M9.2 1V5.2M9.2 14.2V18" stroke="#b5b5b5" stroke-width="1"/><path d="M3.8 9.6H14.7M6.3 7.3L3.8 9.6L6.3 11.9M12.2 7.3L14.7 9.6L12.2 11.9" stroke="#9a9a9a" stroke-width="1.1"/></svg>
<div style="position:absolute;top:58.10px;font-size:15px;line-height:15px;color:#bfbfbf;white-space:nowrap;font-family:'Liberation Sans',sans-serif;left:559.40px;">Merge &amp; Center</div>
<svg style="position:absolute;left:678.9px;top:61.6px;" width="10.800000000000068" height="7.999999999999993" viewBox="0 0 10.800000000000068 7.999999999999993" fill="none"><path d="M2 2L5.40 6.00L8.80 2" stroke="#c0c0c0" stroke-width="1.2"/></svg>
<div style="position:absolute;top:100.80px;font-size:13px;line-height:13px;color:#262626;white-space:nowrap;font-family:'Liberation Sans',sans-serif;left:214.00px;width:600px;text-align:center;">Alignment</div>
<svg style="position:absolute;left:691px;top:103px;" width="11" height="11" viewBox="0 0 11 11" fill="none"><path d="M.6 8.5V.5H8.7M4.1 4.3L9.3 9.3M9.4 4.2V9.4H4.1" stroke="#b0b0b0" stroke-width="1.05"/></svg>
<div style="position:absolute;left:705px;top:2px;width:1px;height:111px;background:#d4d4d4;"></div>
<div style="position:absolute;left:716px;top:10px;width:180px;height:30px;background:#f0f0f0;border:1px solid #dcdcdc;border-radius:5px;box-sizing:border-box"></div>
<div style="position:absolute;top:18.00px;font-size:15px;line-height:15px;color:#c4c4c4;white-space:nowrap;font-family:'Liberation Sans',sans-serif;left:719.60px;transform:scaleX(0.94);transform-origin:0 0;">General</div>
<svg style="position:absolute;left:882.3px;top:21.5px;" width="11.600000000000023" height="8.2" viewBox="0 0 11.600000000000023 8.2" fill="none"><path d="M2 2L5.80 6.20L9.60 2" stroke="#c4c4c4" stroke-width="1.1"/></svg>
<div style="position:absolute;top:52.48px;font-size:24px;line-height:24px;color:#9e9e9e;white-space:nowrap;font-family:'Liberation Sans',sans-serif;left:725.00px;transform:scaleX(0.68);transform-origin:0 0;">$</div>
<svg style="position:absolute;left:749px;top:61.2px;" width="10.899999999999977" height="8.099999999999994" viewBox="0 0 10.899999999999977 8.099999999999994" fill="none"><path d="M2 2L5.45 6.10L8.90 2" stroke="#c8c8c8" stroke-width="1.1"/></svg>
<div style="position:absolute;top:54.11px;font-size:23.5px;line-height:23.5px;color:#a0a0a0;white-space:nowrap;font-family:'Liberation Sans',sans-serif;left:772.50px;transform:scaleX(0.93);transform-origin:0 0;">%</div>
<svg style="position:absolute;left:808px;top:55px;" width="14" height="20" viewBox="0 0 14 20" fill="none"><circle cx="6.2" cy="6.9" r="3.6" fill="#9a9a9a"/><path d="M9.3 6.4C10.2 11 8 15.4 3.2 17.7" stroke="#9a9a9a" stroke-width="2.2" fill="none"/></svg>
<div style="position:absolute;left:831px;top:50px;width:1px;height:30px;background:#d4d4d4;"></div>
<svg style="position:absolute;left:836px;top:54px;" width="60" height="22" viewBox="0 0 60 22" fill="none"><path d="M3 7.6H13.5M6.5 4L2.8 7.6L6.5 11.2" stroke="#b0b0b0" stroke-width="1.2"/><path d="M35 15.5H45.5M42 12L45.7 15.5L42 19" stroke="#b0b0b0" stroke-width="1.2"/></svg>
<div style="position:absolute;top:54.77px;font-size:11.5px;line-height:11.5px;color:#a8a8a8;white-space:nowrap;font-family:'Liberation Sans',sans-serif;left:851.00px;">0</div>
<div style="position:absolute;top:64.47px;font-size:11.5px;line-height:11.5px;color:#a8a8a8;white-space:nowrap;font-family:'Liberation Sans',sans-serif;left:841.50px;">.00</div>
<div style="position:absolute;top:54.77px;font-size:11.5px;line-height:11.5px;color:#a8a8a8;white-space:nowrap;font-family:'Liberation Sans',sans-serif;left:874.30px;">.00</div>
<div style="position:absolute;top:64.47px;font-size:11.5px;line-height:11.5px;color:#a8a8a8;white-space:nowrap;font-family:'Liberation Sans',sans-serif;left:880.50px;">.0</div>
<div style="position:absolute;top:101.00px;font-size:13px;line-height:13px;color:#262626;white-space:nowrap;font-family:'Liberation Sans',sans-serif;left:495.00px;width:600px;text-align:center;transform:scaleX(0.97);transform-origin:50% 0;">Number</div>
<svg style="position:absolute;left:891px;top:103px;" width="11" height="11" viewBox="0 0 11 11" fill="none"><path d="M.6 8.5V.5H8.7M4.1 4.3L9.3 9.3M9.4 4.2V9.4H4.1" stroke="#b0b0b0" stroke-width="1.05"/></svg>
<div style="position:absolute;left:905px;top:2px;width:1px;height:111px;background:#d4d4d4;"></div>
<svg style="position:absolute;left:944px;top:10px;" width="36" height="28" viewBox="0 0 36 28" fill="none"><rect x=".6" y=".6" width="34.5" height="26.6" fill="#f1f1f1" stroke="#a3a3a3" stroke-width="1.3"/><rect x="7.2" y=".6" width="15.3" height="8.4" fill="#d2d2d2" stroke="#a3a3a3" stroke-width="1.2"/><rect x="7.2" y="9" width="10" height="9.4" fill="#d2d2d2" stroke="#a3a3a3" stroke-width="1.2"/><rect x="7.2" y="18.4" width="17.4" height="8.8" fill="#d2d2d2" stroke="#a3a3a3" stroke-width="1.2"/><path d="M.6 9H35M.6 18.4H35M27.8 .6V27.2M7.2 .6V27.2" stroke="#a3a3a3" stroke-width="1.2"/></svg>
<svg style="position:absolute;left:1027px;top:10px;" width="40" height="34" viewBox="0 0 40 34" fill="none"><rect x=".6" y=".6" width="34.6" height="26.6" fill="#f1f1f1" stroke="#a3a3a3" stroke-width="1.3"/><rect x="12.1" y="9" width="23" height="18.2" fill="#d2d2d2"/><path d="M.6 9H35.2M.6 18.4H35.2M12.1 .6V27.2M23.1 .6V27.2" stroke="#a3a3a3" stroke-width="1.2"/><path d="M37.5 9.8C36.4 8.5 30.5 14 23.9 21.5L26.3 23.8C33 17 38.6 11.2 37.5 9.8Z" fill="#f1f1f1" stroke="#a3a3a3" stroke-width="1.3"/><path d="M23.3 21.9C20 21.6 18 23.5 17.6 26C17.2 28.7 15 29.6 12.3 30.4C17.3 33.5 25.5 31.5 26 24.3Z" fill="#c8c8c8" stroke="#a3a3a3" stroke-width="1.2"/></svg>
<svg style="position:absolute;left:1092px;top:10px;" width="40" height="34" viewBox="0 0 40 34" fill="none"><rect x=".6" y=".6" width="34.6" height="26.6" fill="#f1f1f1" stroke="#a3a3a3" stroke-width="1.3"/><rect x="6.7" y="7" width="22" height="14" fill="#d2d2d2"/><path d="M.6 7H35.2M.6 21H35.2M6.7 .6V27.2M28.6 .6V27.2" stroke="#a3a3a3" stroke-width="1.2"/><path d="M37.5 9.8C36.4 8.5 30.5 14 23.9 21.5L26.3 23.8C33 17 38.6 11.2 37.5 9.8Z" fill="#f1f1f1" stroke="#a3a3a3" stroke-width="1.3"/><path d="M23.3 21.9C20 21.6 18 23.5 17.6 26C17.2 28.7 15 29.6 12.3 30.4C17.3 33.5 25.5 31.5 26 24.3Z" fill="#c8c8c8" stroke="#a3a3a3" stroke-width="1.2"/></svg>
<div style="position:absolute;top:49.30px;font-size:15px;line-height:15px;color:#bdbdbd;white-space:nowrap;font-family:'Liberation Sans',sans-serif;left:661.00px;width:600px;text-align:center;">Conditional</div>
<div style="position:absolute;top:69.30px;font-size:15px;line-height:15px;color:#bdbdbd;white-space:nowrap;font-family:'Liberation Sans',sans-serif;left:654.00px;width:600px;text-align:center;">Formatting</div>
<svg style="position:absolute;left:994.5px;top:72px;" width="10.5" height="8" viewBox="0 0 10.5 8" fill="none"><path d="M2 2L5.25 6.00L8.50 2" stroke="#c0c0c0" stroke-width="1.2"/></svg>
<div style="position:absolute;top:49.30px;font-size:15px;line-height:15px;color:#bdbdbd;white-space:nowrap;font-family:'Liberation Sans',sans-serif;left:744.00px;width:600px;text-align:center;transform:scaleX(0.96);transform-origin:50% 0;">Format as</div>
<div style="position:absolute;top:69.30px;font-size:15px;line-height:15px;color:#bdbdbd;white-space:nowrap;font-family:'Liberation Sans',sans-serif;left:738.00px;width:600px;text-align:center;transform:scaleX(1.04);transform-origin:50% 0;">Table</div>
<svg style="position:absolute;left:1058.5px;top:72px;" width="10.5" height="8" viewBox="0 0 10.5 8" fill="none"><path d="M2 2L5.25 6.00L8.50 2" stroke="#c0c0c0" stroke-width="1.2"/></svg>
<div style="position:absolute;top:49.30px;font-size:15px;line-height:15px;color:#bdbdbd;white-space:nowrap;font-family:'Liberation Sans',sans-serif;left:810.50px;width:600px;text-align:center;">Cell</div>
<div style="position:absolute;top:69.30px;font-size:15px;line-height:15px;color:#bdbdbd;white-space:nowrap;font-family:'Liberation Sans',sans-serif;left:802.00px;width:600px;text-align:center;transform:scaleX(0.9);transform-origin:50% 0;">Styles</div>
<svg style="position:absolute;left:1126px;top:72px;" width="10.5" height="8" viewBox="0 0 10.5 8" fill="none"><path d="M2 2L5.25 6.00L8.50 2" stroke="#c0c0c0" stroke-width="1.2"/></svg>
<div style="position:absolute;top:101.50px;font-size:13px;line-height:13px;color:#262626;white-space:nowrap;font-family:'Liberation Sans',sans-serif;left:726.30px;width:600px;text-align:center;transform:scaleX(0.95);transform-origin:50% 0;">Styles</div>
<div style="position:absolute;left:1148px;top:2px;width:1px;height:111px;background:#d4d4d4;"></div>
<svg style="position:absolute;left:1160px;top:5px;" width="48" height="37" viewBox="0 0 48 37" fill="none"><rect x="7.9" y="5.7" width="34.2" height="26.3" fill="#f2f2f2" stroke="#a8a8a8" stroke-width="1.4"/><path d="M19.3 5.7V32M30.5 5.7V32" stroke="#a8a8a8" stroke-width="1.3"/><rect x="13.6" y="14.6" width="31" height="8.4" fill="#d2d2d2" stroke="#a8a8a8" stroke-width="1.3"/><rect x="13" y="15.3" width="8.5" height="7" fill="#e8e8e8"/><path d="M21.8 14.6V23M33 14.6V23" stroke="#b0b0b0" stroke-width="1"/><path d="M13.6 10.2L5.5 18.3L13.6 26.3M5.5 18.3H21.3" stroke="#ffffff" stroke-width="3.6"/><path d="M13.6 10.2L5.5 18.3L13.6 26.3M5.5 18.3H21.3" stroke="#b0b0b0" stroke-width="1.2"/></svg>
<svg style="position:absolute;left:1215px;top:5px;" width="48" height="37" viewBox="0 0 48 37" fill="none"><rect x="6.9" y="5.7" width="34.2" height="8.7" fill="#f2f2f2" stroke="#a8a8a8" stroke-width="1.4"/><rect x="6.9" y="23" width="34.2" height="9.2" fill="#f2f2f2" stroke="#a8a8a8" stroke-width="1.4"/><path d="M18.3 5.7V14.4M29.5 5.7V14.4M18.3 23V32.2M29.5 23V32.2" stroke="#a8a8a8" stroke-width="1.3"/><path d="M12.1 14.6H28.5L31.7 18.8L28.5 23H12.1Z" fill="#d2d2d2" stroke="#a8a8a8" stroke-width="1.3"/><path d="M23.3 14.6V23" stroke="#a8a8a8" stroke-width="1.1"/><path d="M29.2 12.4L42.6 26.3M42.6 12.4L29.2 26.3" stroke="#ffffff" stroke-width="3.6"/><path d="M29.2 12.4L42.6 26.3M42.6 12.4L29.2 26.3" stroke="#b0b0b0" stroke-width="1.2"/></svg>
<svg style="position:absolute;left:1274.5px;top:3.5px;" width="37" height="36" viewBox="0 0 37 36" fill="none"><rect x="1" y="7.5" width="34" height="26.5" fill="#fafafa" stroke="#5a5a5a" stroke-width="2"/><path d="M1 16.3H35M1 25.2H35M10.8 7.5V34M26 7.5V34" stroke="#5a5a5a" stroke-width="1.5"/><rect x="10.8" y="16.3" width="15.2" height="8.9" fill="#85bdea" stroke="#1565c0" stroke-width="2"/><path d="M9 2.2H28M9 .5V4M28 .5V4" stroke="#1f86d6" stroke-width="1.6"/></svg>
<div style="position:absolute;top:50.90px;font-size:15px;line-height:15px;color:#333;white-space:nowrap;font-family:'Liberation Sans',sans-serif;left:885.00px;width:600px;text-align:center;transform:scaleX(0.93);transform-origin:50% 0;">Insert</div>
<svg style="position:absolute;left:1179.3px;top:73.5px;" width="11.0" height="7.799999999999997" viewBox="0 0 11.0 7.799999999999997" fill="none"><path d="M2 2L5.50 5.80L9.00 2" stroke="#333" stroke-width="1.4"/></svg>
<div style="position:absolute;top:51.30px;font-size:15px;line-height:15px;color:#333;white-space:nowrap;font-family:'Liberation Sans',sans-serif;left:939.00px;width:600px;text-align:center;transform:scaleX(0.97);transform-origin:50% 0;">Delete</div>
<svg style="position:absolute;left:1232.8px;top:73.5px;" width="11.0" height="7.799999999999997" viewBox="0 0 11.0 7.799999999999997" fill="none"><path d="M2 2L5.50 5.80L9.00 2" stroke="#333" stroke-width="1.4"/></svg>
<div style="position:absolute;top:48.50px;font-size:15px;line-height:15px;color:#333;white-space:nowrap;font-family:'Liberation Sans',sans-serif;left:992.60px;width:600px;text-align:center;transform:scaleX(0.96);transform-origin:50% 0;">Format</div>
<svg style="position:absolute;left:1287px;top:71.8px;" width="11" height="7.799999999999997" viewBox="0 0 11 7.799999999999997" fill="none"><path d="M2 2L5.50 5.80L9.00 2" stroke="#333" stroke-width="1.4"/></svg>
<div style="position:absolute;top:101.30px;font-size:13px;line-height:13px;color:#262626;white-space:nowrap;font-family:'Liberation Sans',sans-serif;left:938.30px;width:600px;text-align:center;transform:scaleX(0.95);transform-origin:50% 0;">Cells</div>
<div style="position:absolute;left:1328px;top:2px;width:1px;height:111px;background:#d4d4d4;"></div>
<svg style="position:absolute;left:1345.3px;top:5.7px;" width="18" height="20" viewBox="0 0 18 20" fill="none"><path d="M16.5 2.2V1H1.5L9 9.5L1.5 18H16.5V16.8" stroke="#a8a8a8" stroke-width="1.4" fill="none"/></svg>
<div style="position:absolute;top:9.53px;font-size:14.5px;line-height:14.5px;color:#bfbfbf;white-space:nowrap;font-family:'Liberation Sans',sans-serif;left:1369.60px;">AutoSum</div>
<svg style="position:absolute;left:1443.6px;top:11.2px;" width="11.400000000000091" height="8.2" viewBox="0 0 11.400000000000091 8.2" fill="none"><path d="M2 2L5.70 6.20L9.40 2" stroke="#c0c0c0" stroke-width="1.1"/></svg>
<svg style="position:absolute;left:1343.5px;top:38px;" width="21" height="18" viewBox="0 0 21 18" fill="none"><rect x="1" y="1" width="18.5" height="16" fill="#f1f1f1" stroke="#a8a8a8" stroke-width="1.3"/><path d="M1 3.6H19.5" stroke="#a8a8a8" stroke-width="2"/><path d="M9.8 5.8V14.2M6.2 10.6L9.8 14.2L13.4 10.6" stroke="#a8a8a8" stroke-width="1.2"/></svg>
<div style="position:absolute;top:41.03px;font-size:14.5px;line-height:14.5px;color:#bfbfbf;white-space:nowrap;font-family:'Liberation Sans',sans-serif;left:1369.60px;">Fill</div>
<svg style="position:absolute;left:1390.8px;top:42.6px;" width="11.0" height="7.799999999999997" viewBox="0 0 11.0 7.799999999999997" fill="none"><path d="M2 2L5.50 5.80L9.00 2" stroke="#c0c0c0" stroke-width="1.1"/></svg>
<div style="position:absolute;top:5.25px;font-size:20.5px;line-height:20.5px;color:#b0b0b0;white-space:nowrap;font-family:'Liberation Sans',sans-serif;left:1471.00px;transform:scaleX(0.88);transform-origin:0 0;">A</div>
<div style="position:absolute;top:22.65px;font-size:20.5px;line-height:20.5px;color:#b0b0b0;white-space:nowrap;font-family:'Liberation Sans',sans-serif;left:1471.20px;transform:scaleX(0.93);transform-origin:0 0;">Z</div>
<svg style="position:absolute;left:1485px;top:14px;" width="24" height="22" viewBox="0 0 24 22" fill="none"><path d="M1.6 1.3H21.6V5.8L13.7 13.1V20.8H10V13.1L1.6 5.8Z" fill="#f1f1f1" stroke="#a8a8a8" stroke-width="1.5" stroke-linejoin="round"/></svg>
<div style="position:absolute;top:48.90px;font-size:15px;line-height:15px;color:#bdbdbd;white-space:nowrap;font-family:'Liberation Sans',sans-serif;left:1188.50px;width:600px;text-align:center;transform:scaleX(1.02);transform-origin:50% 0;">Sort &amp;</div>
<div style="position:absolute;top:68.50px;font-size:15px;line-height:15px;color:#bdbdbd;white-space:nowrap;font-family:'Liberation Sans',sans-serif;left:1181.50px;width:600px;text-align:center;transform:scaleX(0.96);transform-origin:50% 0;">Filter</div>
<svg style="position:absolute;left:1501.5px;top:72px;" width="10.5" height="8" viewBox="0 0 10.5 8" fill="none"><path d="M2 2L5.25 6.00L8.50 2" stroke="#c0c0c0" stroke-width="1.2"/></svg>
<div style="position:absolute;top:48.90px;font-size:15px;line-height:15px;color:#262626;white-space:nowrap;font-family:'Liberation Sans',sans-serif;left:1524.50px;">F</div>
<div style="position:absolute;top:68.50px;font-size:15px;line-height:15px;color:#262626;white-space:nowrap;font-family:'Liberation Sans',sans-serif;left:1519.00px;">S</div>
<div style="position:absolute;left:1339px;top:65px;width:89px;height:29px;background:#e6e6e6;border:1px solid #5c5c5c;border-radius:5px;box-sizing:border-box"></div>
<svg style="position:absolute;left:1343.2px;top:68.1px;" width="21" height="21" viewBox="0 0 21 21" fill="none"><path d="M1.6 13L12.5 1.8L19.2 8.6L8.2 19.6Z" fill="#fafafa" stroke="#9330aa" stroke-width="1.6" stroke-linejoin="miter"/><path d="M1.6 13L5.4 9.2L12 16L8.2 19.6Z" fill="#d596de" stroke="#9330aa" stroke-width="1.6"/></svg>
<div style="position:absolute;top:72.03px;font-size:14.5px;line-height:14.5px;color:#1f1f1f;white-space:nowrap;font-family:'Liberation Sans',sans-serif;left:1369.60px;">Clear</div>
<svg style="position:absolute;left:1406px;top:74.6px;" width="10.799999999999955" height="8.200000000000003" viewBox="0 0 10.799999999999955 8.200000000000003" fill="none"><path d="M2 2L5.40 6.20L8.80 2" stroke="#222" stroke-width="1.4"/></svg>
<div style="position:absolute;left:1330px;top:60px;width:96px;height:39px;background:none;border:5px solid #ed1c24;box-sizing:border-box"></div>
<div style="position:absolute;left:1450px;top:168px;width:8px;height:579px;background:linear-gradient(90deg,#e9e9e9,#f6f6f6);"></div>
<div style="position:absolute;left:1458px;top:168px;width:11px;height:579px;background:#717171;"></div>
<div style="position:absolute;left:1469px;top:168px;width:7px;height:579px;background:#f4f4f4;"></div>
<div style="position:absolute;left:1476px;top:168px;width:1px;height:579px;background:#c4c4c4;"></div>
<div style="position:absolute;left:1477px;top:168px;width:50px;height:579px;background:#efefef;"></div>
<div style="position:absolute;left:1493px;top:300px;width:40px;height:23px;background:#fff;border:1px solid #8a8a8a;border-radius:0 0 0 5px;box-sizing:border-box;border-top:none;border-right:none"></div>
<svg style="position:absolute;left:1477px;top:325px;" width="50" height="20" viewBox="0 0 50 20" fill="none"><path d="M14 15.5H23.5L33.5 5.5L42.5 15.5H60" stroke="#d2d2d2" stroke-width="1" fill="none"/></svg>
<svg style="position:absolute;left:1500px;top:350px;" width="14" height="50" viewBox="0 0 14 50" fill="none"><path d="M4.5 3.5L10 9L4.5 14.5M4.5 36.5L10 42L4.5 47.5" stroke="#222" stroke-width="1.6" fill="none"/></svg>
<div style="position:absolute;top:351.46px;font-size:16px;line-height:16px;color:#111;white-space:nowrap;font-family:'Liberation Sans',sans-serif;font-weight:bold;left:1520.50px;">F</div>
<div style="position:absolute;top:384.16px;font-size:16px;line-height:16px;color:#111;white-space:nowrap;font-family:'Liberation Sans',sans-serif;font-weight:bold;left:1520.50px;">B</div>
<div style="position:absolute;left:1341px;top:316px;width:190px;height:14px;background:linear-gradient(rgba(0,0,0,0.07),rgba(0,0,0,0));"></div>
<div style="position:absolute;left:1334px;top:100px;width:6px;height:214px;background:linear-gradient(90deg,rgba(0,0,0,0),rgba(0,0,0,0.05));"></div>
<div style="position:absolute;left:1339px;top:94px;width:200px;height:222.5px;background:#fff;border:1px solid #6a6a6a;border-right:none;border-radius:0 0 0 6px;box-sizing:border-box"></div>
<div style="position:absolute;left:1330px;top:94px;width:96px;height:5px;background:#ed1c24;"></div>
<div style="position:absolute;left:1339px;top:93px;width:1px;height:1px;background:#5c5c5c;"></div>
<svg style="position:absolute;left:1353.4px;top:100.9px;" width="21" height="21" viewBox="0 0 21 21" fill="none"><path d="M1.6 13L12.5 1.8L19.2 8.6L8.2 19.6Z" fill="#fafafa" stroke="#9330aa" stroke-width="1.6" stroke-linejoin="miter"/><path d="M1.6 13L5.4 9.2L12 16L8.2 19.6Z" fill="#d596de" stroke="#9330aa" stroke-width="1.6"/></svg>
<div style="position:absolute;top:105.97px;font-size:14.8px;line-height:14.8px;color:#1a1a1a;white-space:nowrap;font-family:'Liberation Sans',sans-serif;left:1386.50px;">Clear All</div>
<div style="position:absolute;left:1407px;top:120.5px;width:7.8px;height:1px;background:#1a1a1a;"></div>
<svg style="position:absolute;left:1350px;top:134px;" width="28" height="26" viewBox="0 0 28 26" fill="none"><ellipse cx="7.5" cy="7" rx="2.3" ry="2.7" stroke="#a0a0a0" stroke-width="1.2"/><ellipse cx="13.9" cy="12.1" rx="2.4" ry="2.6" stroke="#a0a0a0" stroke-width="1.2"/><path d="M14.3 4.3L7 14.8" stroke="#a0a0a0" stroke-width="1.1"/><path d="M13.3 19.5L20.4 11.8L24.3 16.1L17.1 23.4Z" fill="#efefef" stroke="#a8a8a8" stroke-width="1.3" stroke-linejoin="round"/><path d="M13.3 19.5L15.4 17.2L19.3 21.2L17.1 23.4Z" fill="#cacaca" stroke="#a8a8a8" stroke-width="1.2"/></svg>
<div style="position:absolute;top:142.27px;font-size:14.8px;line-height:14.8px;color:#c0c0c0;white-space:nowrap;font-family:'Liberation Sans',sans-serif;left:1386.50px;transform:scaleX(0.97);transform-origin:0 0;">Clear Formats</div>
<div style="position:absolute;left:1424.3px;top:156.6px;width:6.3px;height:1px;background:#c8c8c8;"></div>
<div style="position:absolute;top:177.97px;font-size:14.8px;line-height:14.8px;color:#1a1a1a;white-space:nowrap;font-family:'Liberation Sans',sans-serif;left:1386.50px;transform:scaleX(0.97);transform-origin:0 0;">Clear Contents</div>
<div style="position:absolute;left:1386.3px;top:192.1px;width:8.4px;height:1px;background:#1a1a1a;"></div>
<div style="position:absolute;top:214.17px;font-size:14.8px;line-height:14.8px;color:#c0c0c0;white-space:nowrap;font-family:'Liberation Sans',sans-serif;left:1386.50px;transform:scaleX(0.97);transform-origin:0 0;">Clear Comments and Notes</div>
<div style="position:absolute;left:1442px;top:228.8px;width:13px;height:1px;background:#c8c8c8;"></div>
<div style="position:absolute;top:249.97px;font-size:14.8px;line-height:14.8px;color:#c0c0c0;white-space:nowrap;font-family:'Liberation Sans',sans-serif;left:1386.50px;transform:scaleX(0.97);transform-origin:0 0;">Clear Hyperlinks</div>
<div style="position:absolute;left:1464px;top:264.5px;width:3.7px;height:1px;background:#c8c8c8;"></div>
<div style="position:absolute;left:1381px;top:277px;width:150px;height:1px;background:#d6d6d6;"></div>
<div style="position:absolute;top:288.87px;font-size:14.8px;line-height:14.8px;color:#c0c0c0;white-space:nowrap;font-family:'Liberation Sans',sans-serif;left:1386.50px;transform:scaleX(0.97);transform-origin:0 0;">Remove Hyperlinks</div>
<div style="position:absolute;left:1386.3px;top:303.8px;width:8.7px;height:1px;background:#c8c8c8;"></div>
<svg style="position:absolute;left:1350px;top:284px;" width="28" height="24" viewBox="0 0 28 24" fill="none"><path d="M9.2 12.7C6.8 12.4 5.6 10.8 5.6 9C5.6 6.8 7 5.2 8.9 5.2H14.5C16.5 5.2 17.8 7.2 17.8 10.2M15.3 8.6C13.3 8.6 12 10.4 12 12.6C12 14.9 13.8 16.6 16.4 16.7M20.4 8.6C21.6 8.8 22.8 9.3 23.5 10.2" stroke="#959595" stroke-width="1.25" fill="none"/><path d="M16.6 12.4L24.5 20.4M24.5 12.4L16.6 20.4" stroke="#a0a0a0" stroke-width="1.05"/></svg>
</body></html>
